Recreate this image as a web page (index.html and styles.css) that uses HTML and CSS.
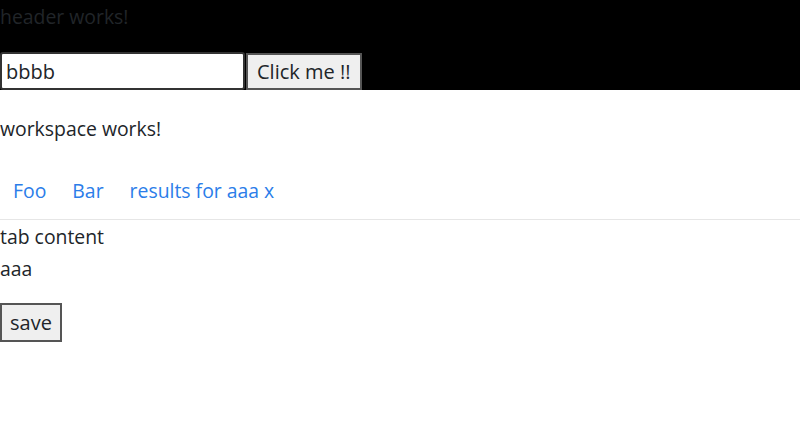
FILE: index.html
```html
<!DOCTYPE html>
<html lang="en">
<head>
    <meta charset="UTF-8">
    <meta name="viewport" content="width=device-width, initial-scale=1.0">
    <title>Workspace</title>
    <link rel="stylesheet" href="styles.css">
</head>
<body>
    <header class="app-header">
        <p class="header-title">header works!</p>
        <div class="search-row">
            <input type="text" class="search-input" value="bbbb">
            <button class="btn">Click me !!</button>
        </div>
    </header>

    <main class="workspace">
        <p class="workspace-title">workspace works!</p>

        <ul class="tabs">
            <li><a href="#" class="tab-link">Foo</a></li>
            <li><a href="#" class="tab-link">Bar</a></li>
            <li><a href="#" class="tab-link">results for aaa x</a></li>
        </ul>

        <div class="tab-content">
            <div class="tab-text">tab content</div>
            <div class="tab-value">aaa</div>
            <button class="btn save-btn">save</button>
        </div>
    </main>
</body>
</html>
```

FILE: styles.css
```css
* {
    margin: 0;
    padding: 0;
    box-sizing: border-box;
}

body {
    font-family: "Open Sans", "Noto Sans", sans-serif;
    font-size: 19.4px;
    line-height: 30px;
    color: #212529;
    background: #fff;
}

.app-header {
    background: #000;
}

.header-title {
    padding-top: 2px;
    margin-bottom: 20px;
}

.search-row {
    display: flex;
    align-items: flex-end;
}

.search-input {
    width: 245px;
    height: 38px;
    padding: 0 4px;
    font: inherit;
    font-size: 20px;
    color: #212529;
    border: 2px solid #333;
    border-radius: 3px;
    background: #fff;
    outline: none;
}

.btn {
    font: inherit;
    font-size: 20px;
    color: #212529;
    background: #efefef;
    border: 2px solid #555;
    padding: 0 9px;
    height: 37px;
    cursor: pointer;
}

.search-row .btn {
    margin-left: 1px;
}

.workspace-title {
    margin: 22px 0 16px;
    padding-top: 2px;
}

.tabs {
    display: flex;
    list-style: none;
    border-bottom: 1px solid #e6e6e6;
}

.tab-link {
    display: block;
    padding: 16px 13px 13px;
    color: #2b7de9;
    text-decoration: none;
}

.tab-text {
    padding-top: 2px;
}

.tab-value {
    margin-top: 2px;
}

.save-btn {
    margin-top: 19px;
    height: 39px;
    padding: 0 8px;
}
```
